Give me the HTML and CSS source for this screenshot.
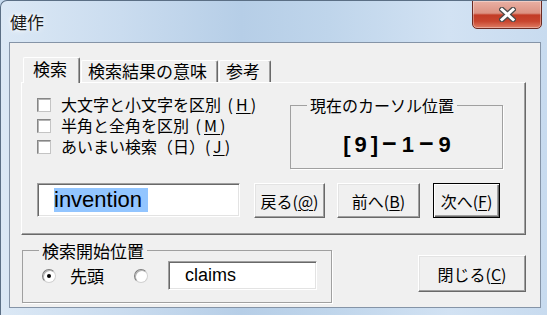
FILE: index.html
```html
<!DOCTYPE html>
<html lang="ja">
<head>
  <meta charset="UTF-8" />
  <title>健作</title>
  <link rel="stylesheet" href="styles.css">
</head>
<body>

  <div class="window">

    <!-- Title bar -->
    <div class="titlebar">
      <span class="title">健作</span>
      <div class="close-x">
        <svg width="17" height="15" viewBox="0 0 17 15">
          <path d="M3 2.5 L14 12.5 M14 2.5 L3 12.5" stroke="#4b4b4b" stroke-width="5.5" stroke-linecap="square" fill="none"/>
          <path d="M3 2.5 L14 12.5 M14 2.5 L3 12.5" stroke="#ffffff" stroke-width="3" stroke-linecap="square" fill="none"/>
        </svg>
      </div>
    </div>

    <div class="client">

      <!-- Tab control -->
      <div class="tabs">
        <div class="tab-strip">
          <div class="tab selected">検索</div>
          <div class="tab">検索結果の意味</div>
          <div class="tab">参考</div>
        </div>

        <div class="tab-panel">
          <div class="top-row">
            <div class="options">
              <div class="check"><span class="box"></span>大文字と小文字を区別<span class="key"> (<u>H</u>)</span></div>
              <div class="check"><span class="box"></span>半角と全角を区別<span class="key"> (<u>M</u>)</span></div>
              <div class="check"><span class="box"></span>あいまい検索（日）<span class="key">(<u>J</u>)</span></div>
            </div>

            <fieldset class="group cursor-group">
              <legend>現在のカーソル位置</legend>
              <div class="pos"><span class="bracket">[9]</span><span class="dash">−</span>1<span class="dash">−</span>9</div>
            </fieldset>
          </div>

          <div class="search-row">
            <div class="textbox search-box"><span class="sel">invention&nbsp;</span></div>
            <div class="btn btn-back">戻る(<u>@</u>)</div>
            <div class="btn btn-prev">前へ(<u>B</u>)</div>
            <div class="btn btn-next default">次へ(<u>F</u>)</div>
          </div>
        </div>
      </div>

      <!-- Bottom -->
      <div class="bottom-row">
        <fieldset class="group start-group">
          <legend>検索開始位置</legend>
          <div class="start-row">
            <span class="radio on"></span>
            <span class="radio-label">先頭</span>
            <span class="radio"></span>
            <div class="textbox start-box">claims</div>
          </div>
        </fieldset>

        <div class="btn btn-close">閉じる(<u>C</u>)</div>
      </div>

    </div>
  </div>

</body>
</html>
```

FILE: styles.css
```css
* {
  box-sizing: border-box;
}

body {
  margin: 0;
  background-color: #c6daee;
  font-family: "Noto Sans CJK JP", sans-serif;
  color: #000;
}

.window {
  width: 547px;
  height: 315px;
  display: flex;
  flex-direction: column;
  border-left: 1px solid #5b6f85;
  border-top: 1px solid #5b6f85;
  border-top-left-radius: 7px;
  overflow: hidden;
  background: linear-gradient(90deg, #dbe8f5 0%, #cadcef 22%, #b6cee7 44%, #bfd5eb 60%, #d2e2f3 82%, #c8dbef 100%);
}

/* title bar */

.titlebar {
  height: 41px;
  display: flex;
  justify-content: space-between;
  align-items: flex-start;
  padding: 0 5px 0 9px;
}

.title {
  font-size: 17px;
  line-height: 17px;
  margin-top: 12px;
  color: #1a1a1a;
  text-shadow: 0 0 6px #fff, 0 0 3px #fff;
}

.close-x {
  width: 70px;
  height: 29px;
  margin-top: -1px;
  display: flex;
  align-items: center;
  justify-content: center;
  border: 1px solid #6b2a22;
  border-radius: 0 0 5px 5px;
  background: linear-gradient(#e9b0a4 0%, #dc9282 45%, #c23b25 52%, #c8452e 75%, #df7d64 100%);
  box-shadow: inset 0 0 0 1px rgba(255, 255, 255, 0.35);
}

/* client area */

.client {
  flex: 1;
  margin: 0 6px 7px 8px;
  border: 1px solid #8594a7;
  background-color: #f0f0f0;
  display: flex;
  flex-direction: column;
}

/* tabs */

.tabs {
  margin: 14px 14px 0 11px;
}

.tab-strip {
  display: flex;
  align-items: flex-end;
  padding-left: 2px;
  height: 25px;
}

.tab {
  height: 22px;
  font-size: 17px;
  line-height: 20px;
  padding: 0 10px 0 6px;
  border-top: 1px solid #fff;
  border-left: 1px solid #fff;
  border-right: 1px solid #696969;
  border-radius: 2px 2px 0 0;
  box-shadow: inset -1px 0 #a0a0a0;
  background-color: #f0f0f0;
  white-space: nowrap;
}

.tab + .tab {
  margin-left: 1px;
}

.tab.selected {
  height: 26px;
  margin-bottom: -1px;
  padding: 0 12px 0 9px;
  line-height: 22px;
  position: relative;
  z-index: 1;
}

.tab-panel {
  height: 153px;
  border-top: 1px solid #fff;
  border-left: 1px solid #fff;
  border-right: 1px solid #696969;
  border-bottom: 1px solid #696969;
  box-shadow: inset -1px -1px #a0a0a0;
  padding: 11px 22px 0 15px;
}

.top-row {
  display: flex;
  align-items: flex-start;
}

.options {
  font-size: 16px;
  line-height: 21px;
}

.check {
  display: flex;
  align-items: center;
  height: 21px;
  white-space: nowrap;
}

.key {
  letter-spacing: 3px;
  white-space: pre;
}

.box {
  flex-shrink: 0;
  width: 14px;
  height: 14px;
  margin-right: 10px;
  background-color: #fff;
  border: 1px solid;
  border-color: #868686 #c4c4c4 #c4c4c4 #868686;
  box-shadow: inset 1px 1px #b4b4b4;
}

u {
  text-decoration-thickness: 1px;
  text-underline-offset: 2px;
}

/* group boxes */

.group {
  margin: 0;
  padding: 0;
  border: 1px solid #a0a0a0;
  box-shadow: 1px 1px 0 #fff;
}

.group legend {
  font-size: 16px;
  line-height: 16px;
  padding: 0 3px;
  margin-left: 16px;
}

.cursor-group {
  margin: 3px 0 0 auto;
  width: 213px;
  height: 72px;
}

.pos {
  margin-top: 18px;
  padding-left: 1px;
  display: flex;
  justify-content: center;
  align-items: baseline;
  font-family: "Liberation Sans", Arial, sans-serif;
  font-weight: bold;
  font-size: 22px;
  line-height: 24px;
}

.bracket {
  letter-spacing: 4px;
}

.dash {
  font-size: 25px;
  margin: 0 5px 0 5px;
}

.bracket + .dash {
  margin-left: 0;
}

/* search row */

.search-row {
  display: flex;
  align-items: flex-start;
  margin-top: 14px;
}

.textbox {
  flex-shrink: 0;
  background-color: #fff;
  border: 1px solid;
  border-color: #a0a0a0 #fff #fff #a0a0a0;
  box-shadow: inset 1px 1px #696969, inset -1px -1px #e3e3e3;
  font-family: "Liberation Sans", Arial, sans-serif;
  display: flex;
  align-items: center;
}

.search-box {
  width: 203px;
  height: 34px;
  padding-left: 16px;
  font-size: 22px;
}

.sel {
  background-color: #92c5ff;
  line-height: 24px;
}

.btn {
  flex-shrink: 0;
  height: 35px;
  display: flex;
  align-items: center;
  justify-content: center;
  font-size: 16px;
  background-color: #f0f0f0;
  border: 1px solid;
  border-color: #fff #696969 #696969 #fff;
  box-shadow: inset -1px -1px #a0a0a0, inset 1px 1px #e3e3e3;
  white-space: nowrap;
}

.btn-back {
  width: 71px;
  margin-left: 14px;
}

.btn-prev {
  width: 83px;
  margin-left: 12px;
}

.btn-next {
  width: 67px;
  margin-left: 13px;
}

.btn.default {
  border: 1px solid #000;
  box-shadow: inset 1px 1px #fff, inset -1px -1px #696969, inset -2px -2px #a0a0a0;
}

/* bottom row */

.bottom-row {
  display: flex;
  align-items: flex-start;
  padding: 0 14px 0 12px;
}

.start-group {
  margin-top: 7px;
  width: 310px;
  height: 61px;
}

.start-group legend {
  font-size: 17px;
  line-height: 17px;
}

.start-row {
  display: flex;
  align-items: center;
  margin-top: 2px;
  padding-left: 19px;
}

.radio {
  flex-shrink: 0;
  width: 14px;
  height: 14px;
  border-radius: 50%;
  background-color: #fff;
  border: 1px solid;
  border-color: #7e7e7e #d0d0d0 #d0d0d0 #7e7e7e;
  box-shadow: inset 1px 1px #b4b4b4;
  display: flex;
  align-items: center;
  justify-content: center;
}

.radio.on::after {
  content: "";
  width: 4px;
  height: 4px;
  border-radius: 50%;
  background-color: #000;
}

.radio-label {
  font-size: 17px;
  margin-left: 14px;
  margin-right: 30px;
}

.start-box {
  width: 149px;
  height: 29px;
  margin-left: 20px;
  padding-left: 16px;
  font-size: 18px;
}

.btn-close {
  width: 108px;
  height: 37px;
  margin: 20px 0 0 auto;
}
```
